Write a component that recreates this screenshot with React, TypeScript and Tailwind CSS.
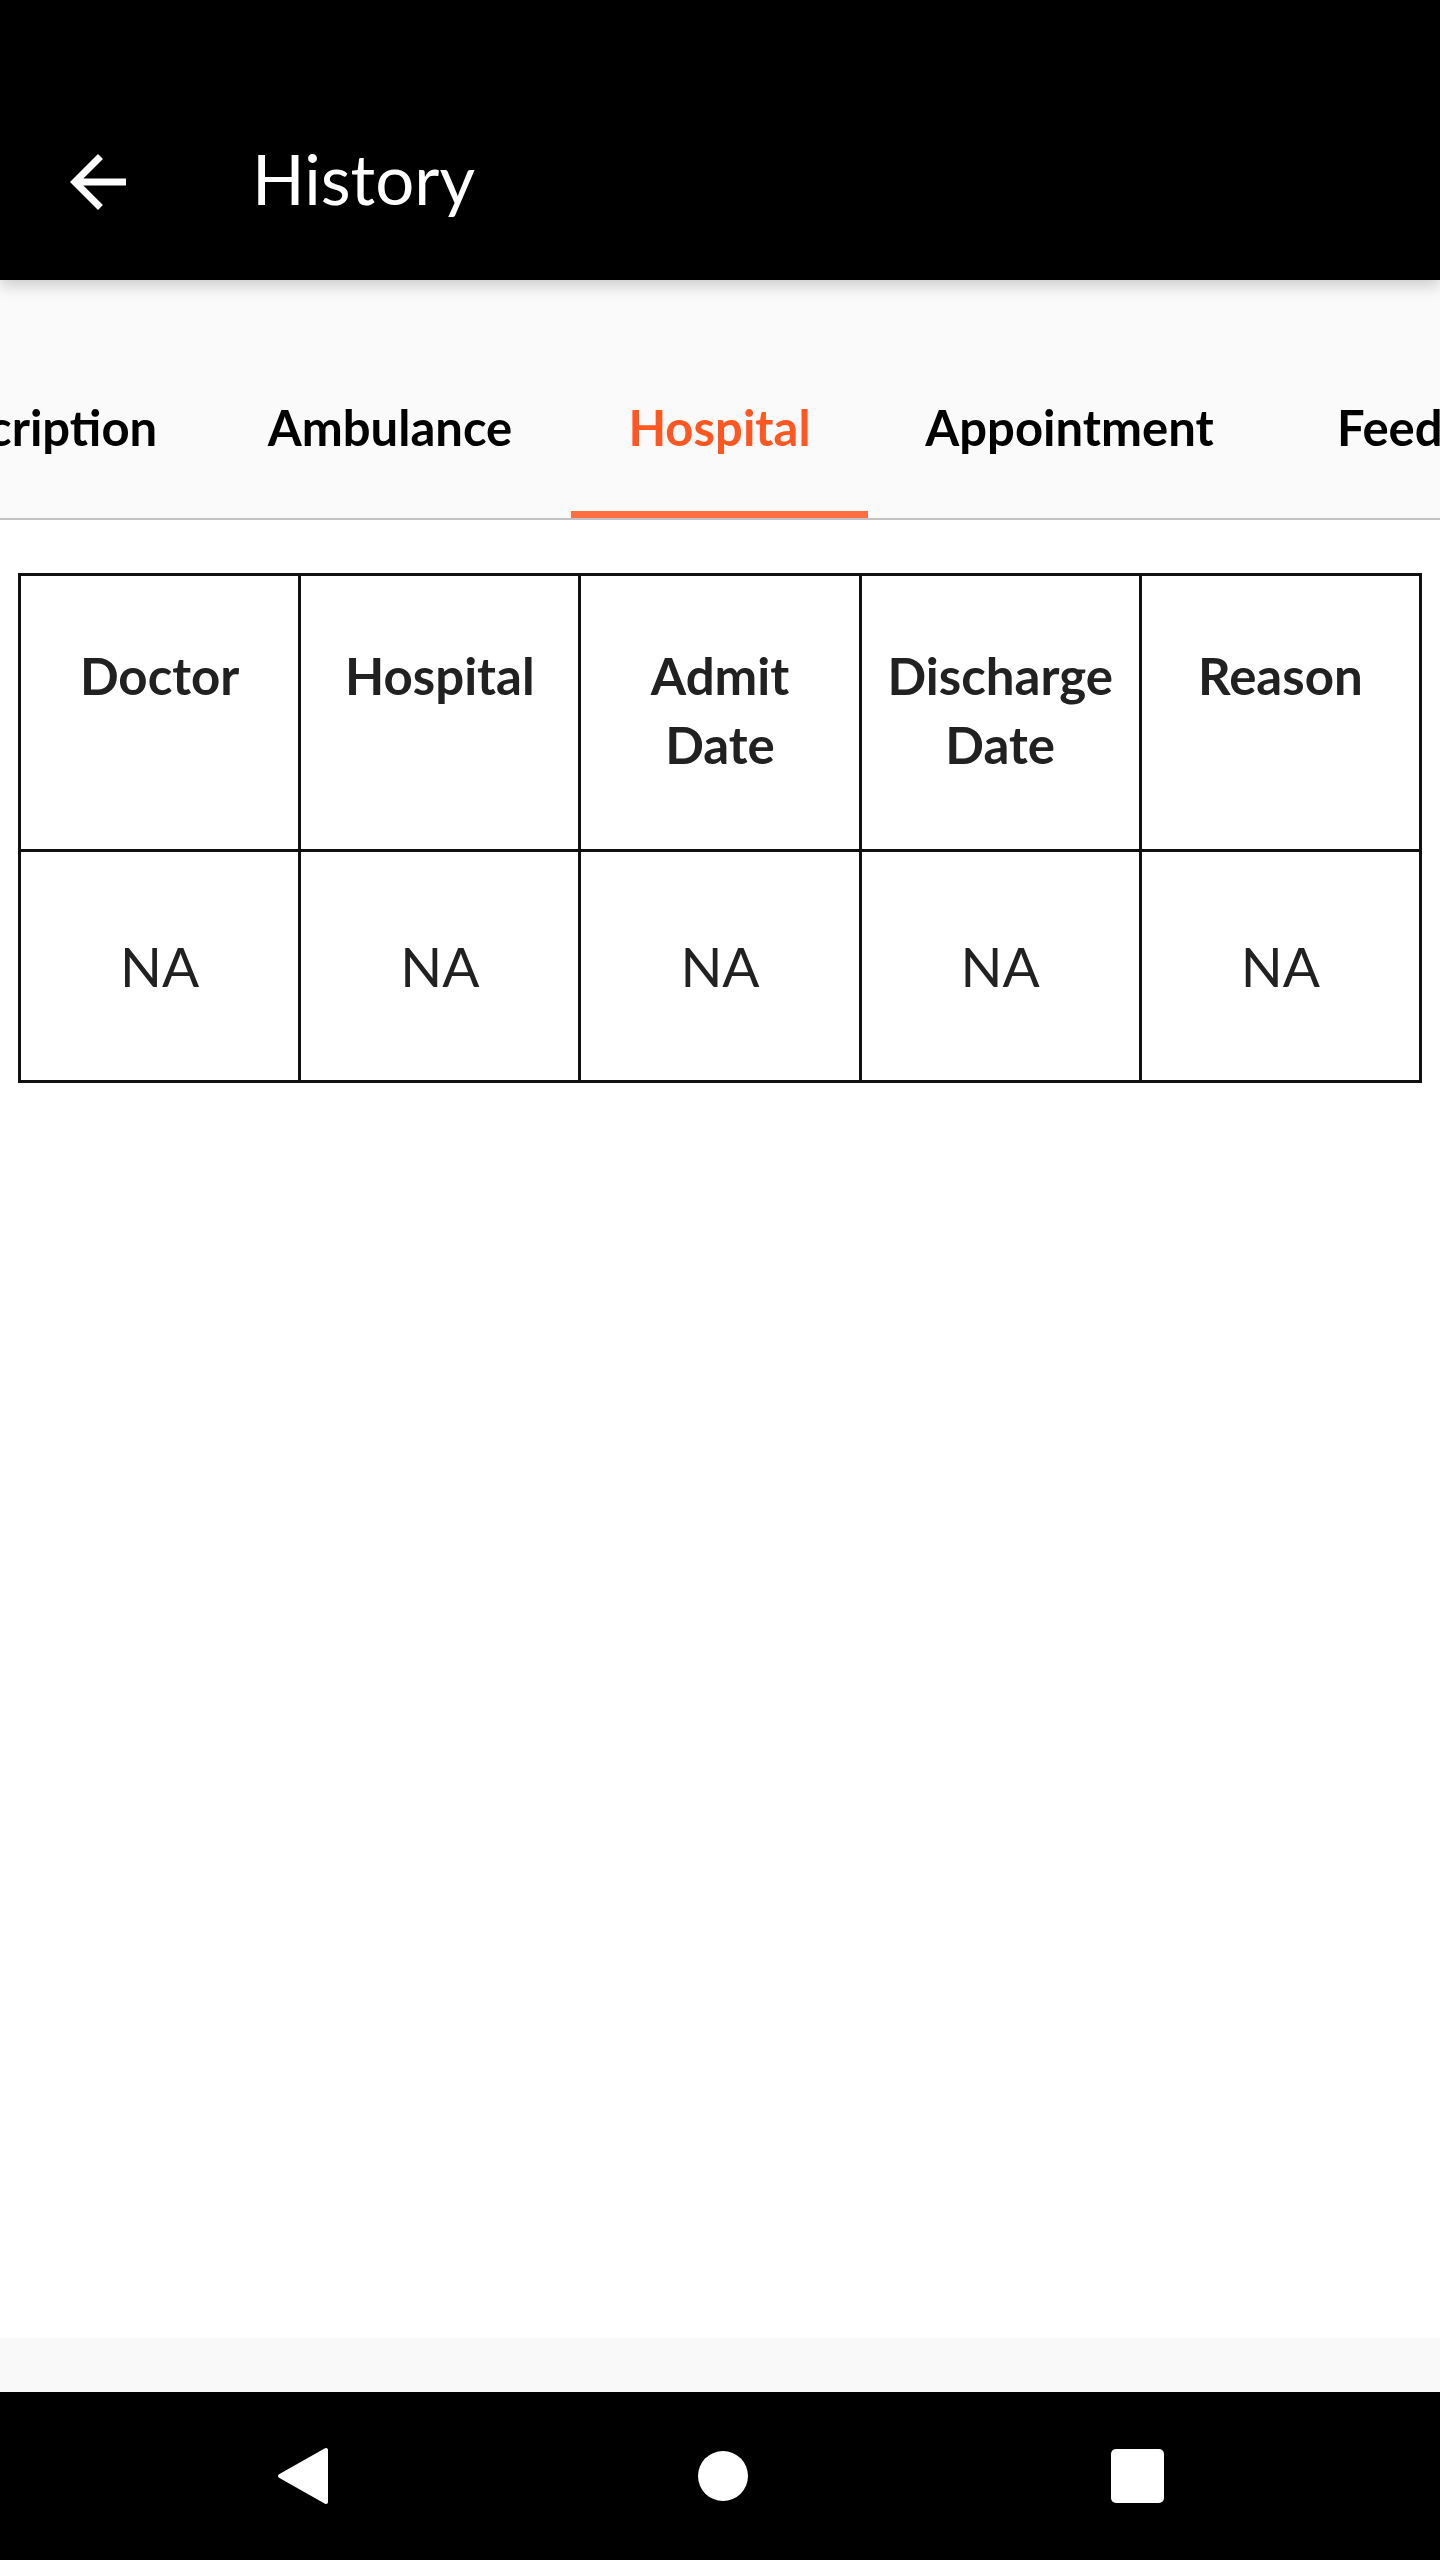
import React from "react";

const tabs = [
  { label: "Prescription", w: "w-[368px]", active: false },
  { label: "Ambulance", w: "w-[362px]", active: false },
  { label: "Hospital", w: "w-[297px]", active: true },
  { label: "Appointment", w: "w-[403px]", active: false },
  { label: "Feedback", w: "w-[340px]", active: false },
];

const headers: React.ReactNode[] = [
  "Doctor",
  "Hospital",
  <>Admit<br />Date</>,
  <>Discharge<br />Date</>,
  "Reason",
];

export default function App() {
  return (
    <div
      className="w-[1440px] h-[2560px] flex flex-col bg-white overflow-hidden"
      style={{ fontFamily: "Lato, 'Noto Sans', sans-serif" }}
    >
      <header className="relative z-10 h-[280px] shrink-0 bg-black flex flex-col shadow-[0_6px_14px_rgba(0,0,0,0.18)]">
        <div className="h-[84px]" />
        <div className="h-[196px] flex items-center">
          <div className="ml-[56px] w-[84px] h-[84px]">
            <svg viewBox="0 0 24 24" width="84" height="84" fill="#ffffff">
              <path d="M20 11H7.83l5.59-5.59L12 4l-8 8 8 8 1.41-1.41L7.83 13H20v-2z" />
            </svg>
          </div>
          <div className="ml-[112px] mb-[8px] text-white text-[69px] leading-none font-normal">History</div>
        </div>
      </header>

      <div className="h-[238px] shrink-0 bg-[#fafafa] overflow-hidden">
        <div className="flex ml-[-159px] h-full">
          {tabs.map((t) => (
            <div key={t.label} className={`${t.w} shrink-0 h-full flex flex-col`}>
              <div
                className={`flex-1 flex items-center justify-center pt-[64px] text-[49px] font-bold whitespace-nowrap ${
                  t.active ? "text-[#ff5722]" : "text-black"
                }`}
              >
                {t.label}
              </div>
              <div className={`h-[7px] ${t.active ? "bg-[#ff6e40]" : "bg-transparent"}`} />
            </div>
          ))}
        </div>
      </div>
      <div className="h-[2px] shrink-0 bg-[#c2c2c2]" />

      <main className="flex-1 bg-white px-[18px] pt-[53px]">
        <div className="grid grid-cols-5 border-l-[3px] border-t-[3px] border-[#111111] text-[#212121]">
          {headers.map((h, i) => (
            <div
              key={i}
              className="h-[276px] border-r-[3px] border-b-[3px] border-[#111111] pt-[65px] px-[8px] text-center text-[51px] leading-[69px] font-bold"
            >
              {h}
            </div>
          ))}
          {headers.map((_, i) => (
            <div
              key={"d" + i}
              className="h-[231px] border-r-[3px] border-b-[3px] border-[#111111] flex items-center justify-center text-[55px] font-normal"
            >
              NA
            </div>
          ))}
        </div>
      </main>

      <div className="h-[54px] shrink-0 bg-[#f9f9f9]" />
      <nav className="h-[168px] shrink-0 bg-black flex items-center justify-center">
        <div className="w-[56px] h-[56px] flex items-center justify-center">
          <svg width="56" height="58" viewBox="0 0 56 58">
            <polygon
              points="51,3 51,55 5,29"
              fill="#ffffff"
              stroke="#ffffff"
              strokeWidth="4"
              strokeLinejoin="round"
            />
          </svg>
        </div>
        <div className="ml-[364px] w-[56px] h-[56px] flex items-center justify-center">
          <div className="w-[50px] h-[50px] rounded-full bg-white" />
        </div>
        <div className="ml-[359px] w-[56px] h-[56px] flex items-center justify-center">
          <div className="w-[53px] h-[54px] rounded-[5px] bg-white" />
        </div>
      </nav>
    </div>
  );
}
